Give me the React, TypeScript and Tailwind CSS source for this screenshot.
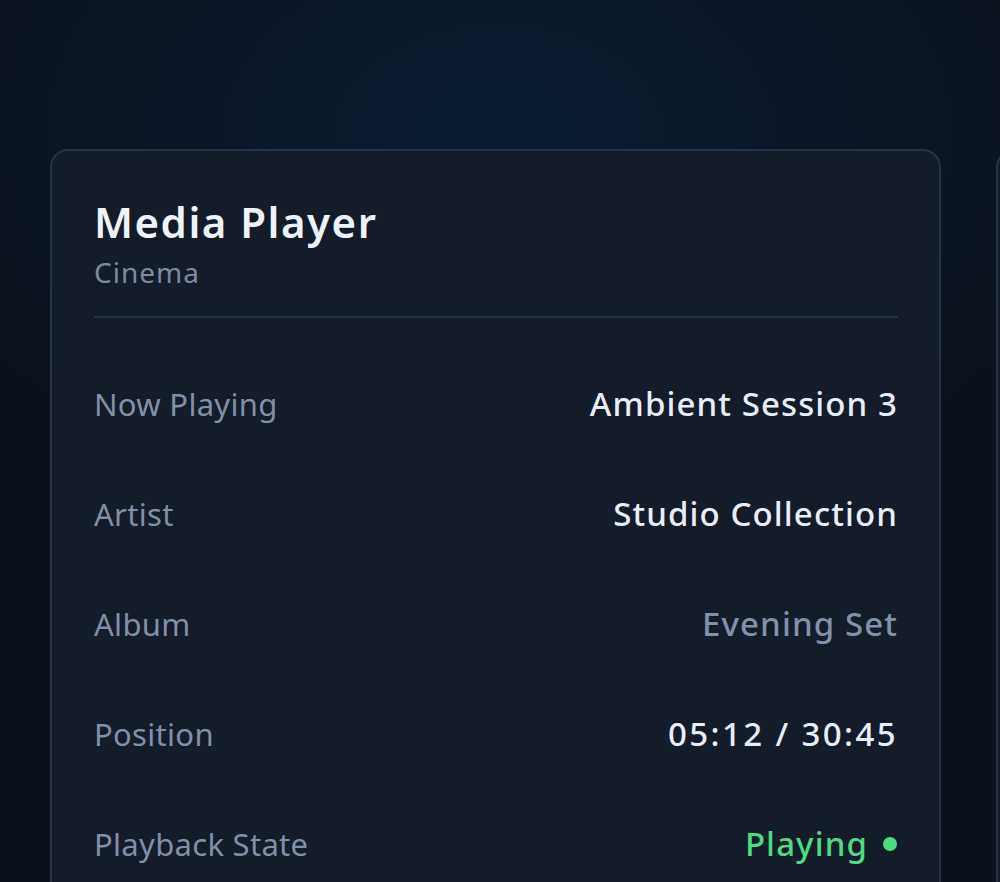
const rows = [
  { label: "Now Playing", value: "Ambient Session 3", tone: "text-[#e8eef8] tracking-[1.1px]" },
  { label: "Artist", value: "Studio Collection", tone: "text-[#e8eef8] tracking-[1.1px]" },
  { label: "Album", value: "Evening Set", tone: "text-[#8391a8] tracking-[1.1px]" },
  { label: "Position", value: "05:12 / 30:45", tone: "text-[#e8eef8] tracking-[2.4px]" },
];

function MediaCard() {
  return (
    <section className="w-[891px] shrink-0 rounded-[18px] border-2 border-[#263248] bg-[#141b29] pl-[42px] pr-[41px] pt-[45px] pb-10">
      <header className="border-b-2 border-[#263248] pb-[26px]">
        <h2 className="text-[42px] leading-[52px] font-semibold tracking-[1.5px] text-[#eef3fb]">Media Player</h2>
        <p className="mt-[6px] text-[28px] leading-[36px] tracking-[1px] text-[#7d8aa0]">Cinema</p>
      </header>
      <dl className="pt-[31px]">
        {rows.map((row) => (
          <div key={row.label} className="flex h-[110px] items-center justify-between">
            <dt className="text-[31px] tracking-[0.3px] text-[#8190a7]">{row.label}</dt>
            <dd className={`text-[33px] font-medium ${row.tone}`}>{row.value}</dd>
          </div>
        ))}
        <div className="flex h-[110px] items-center justify-between">
          <dt className="text-[31px] tracking-[0.3px] text-[#8190a7]">Playback State</dt>
          <dd className="flex items-center gap-[15px] pr-[1px] text-[33px] font-medium tracking-[1.1px] text-[#4ade80]">
            Playing
            <span className="h-[14px] w-[14px] rounded-full bg-[#4ade80]" />
          </dd>
        </div>
      </dl>
    </section>
  );
}

export default function App() {
  return (
    <main
      className="h-[882px] overflow-hidden bg-[#0b131f] bg-[radial-gradient(ellipse_60%_45%_at_50%_15%,#0b1c30_0%,#0b1626_55%,#0b121d_100%)] pl-[50px] pt-[149px]"
      style={{ fontFamily: '"Noto Sans", "Open Sans", sans-serif' }}
    >
      <div className="flex gap-[55px]">
        <MediaCard />
        <section className="h-[900px] w-[891px] shrink-0 rounded-[18px] border-2 border-[#263248] bg-[#141b29]" />
      </div>
    </main>
  );
}
